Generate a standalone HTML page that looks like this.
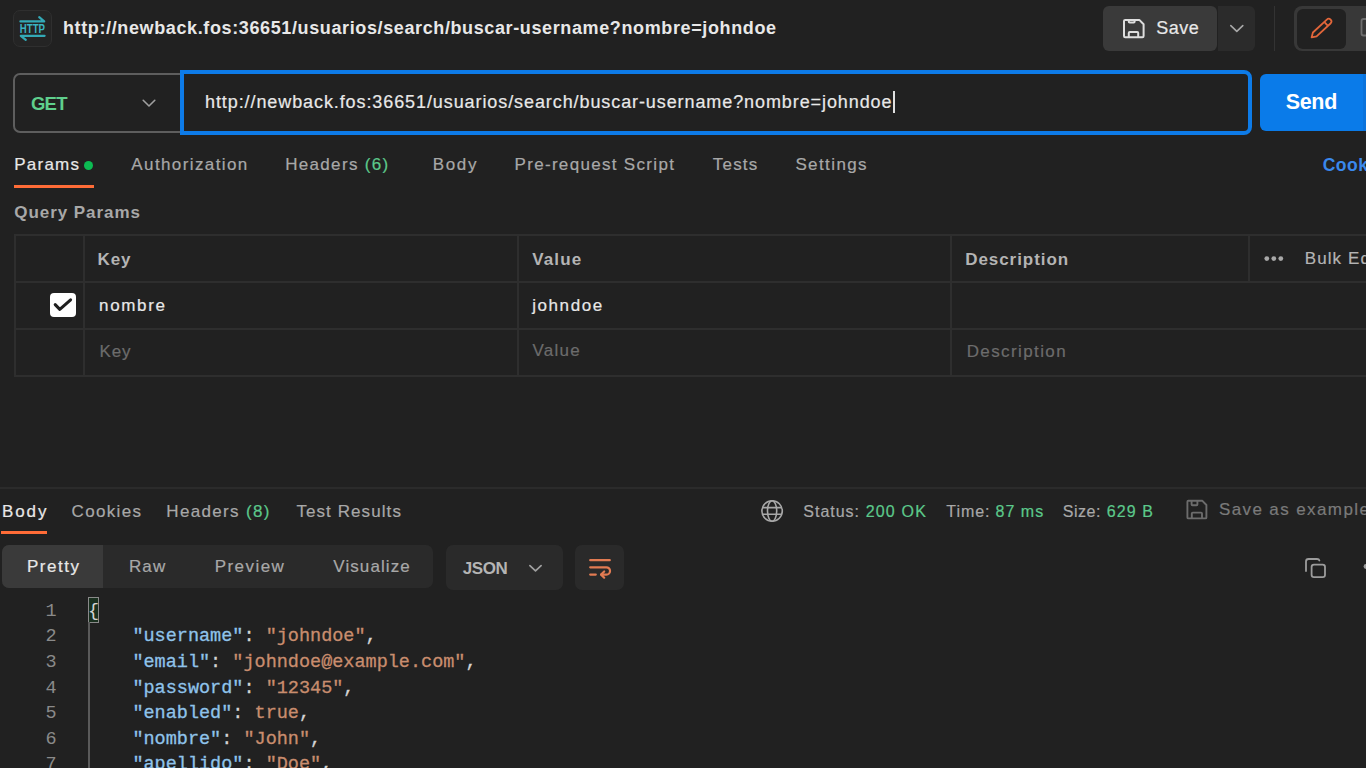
<!DOCTYPE html>
<html><head><meta charset="utf-8">
<style>
html,body{margin:0;padding:0;width:1366px;height:768px;overflow:hidden;background:#212121;}
body{position:relative;font-family:"Liberation Sans", sans-serif;}
.t{position:absolute;white-space:pre;}
.b{position:absolute;box-sizing:border-box;}
</style></head><body>
<!-- HTTP icon -->
<div class="b" style="left:12.5px;top:10px;width:39px;height:37px;background:#242424;border:1px solid #2f2f2f;border-radius:7px;"></div>
<!-- Save button -->
<div class="b" style="left:1103px;top:6px;width:114px;height:45px;background:#3a3a3a;border-radius:6px;"></div>
<div class="b" style="left:1218px;top:6px;width:37px;height:45px;background:#2b2b2b;border-radius:0 6px 6px 0;"></div>
<div class="b" style="left:1274px;top:6px;width:1px;height:45px;background:#333;"></div>
<div class="b" style="left:1294px;top:5.5px;width:90px;height:45.5px;background:#383838;border-radius:8px;"></div>
<div class="b" style="left:1297px;top:8.5px;width:48.5px;height:40px;background:#212121;border-radius:6px;"></div>
<!-- request line -->
<div class="b" style="left:12.5px;top:73px;width:180px;height:59.5px;border:2px solid #5e5e5e;border-radius:7px;"></div>
<div class="b" style="left:180px;top:70px;width:1072px;height:65px;background:#212121;border:4px solid #0d7be8;border-radius:0 8px 8px 0;"></div>
<div class="b" style="left:893px;top:91px;width:1.5px;height:22px;background:#e0e0e0;"></div>
<div class="b" style="left:1260px;top:74px;width:120px;height:57px;background:#0a7be9;border-radius:6px;"></div>
<div class="b" style="left:1363px;top:74px;width:3px;height:57px;background:#0b73dc;"></div>
<!-- tabs -->
<div class="b" style="left:84.3px;top:161.2px;width:9px;height:9px;background:#0cbb52;border-radius:50%;"></div>
<div class="b" style="left:14px;top:185px;width:80px;height:3px;background:#ff6c37;"></div>
<!-- table -->
<div class="b" style="left:14px;top:234px;width:1400px;height:2px;background:#2e2e2e;"></div>
<div class="b" style="left:14px;top:281px;width:1400px;height:2px;background:#2e2e2e;"></div>
<div class="b" style="left:14px;top:328px;width:1400px;height:2px;background:#2e2e2e;"></div>
<div class="b" style="left:14px;top:375px;width:1400px;height:2px;background:#2e2e2e;"></div>
<div class="b" style="left:14px;top:234px;width:2px;height:143px;background:#2e2e2e;"></div>
<div class="b" style="left:83px;top:234px;width:2px;height:143px;background:#2e2e2e;"></div>
<div class="b" style="left:517px;top:234px;width:2px;height:143px;background:#2e2e2e;"></div>
<div class="b" style="left:950px;top:234px;width:2px;height:143px;background:#2e2e2e;"></div>
<div class="b" style="left:1248px;top:234px;width:2px;height:49px;background:#2e2e2e;"></div>
<div class="b" style="left:50px;top:293px;width:26px;height:24px;background:#fff;border-radius:4px;"></div>
<!-- response -->
<div class="b" style="left:0;top:486.5px;width:1366px;height:2px;background:#2b2b2b;"></div>
<div class="b" style="left:1px;top:531px;width:46px;height:3px;background:#ff6c37;"></div>
<div class="b" style="left:1.5px;top:545px;width:431.5px;height:43px;background:#2a2a2a;border-radius:7px;"></div>
<div class="b" style="left:1.5px;top:545px;width:101.5px;height:43px;background:#3a3a3a;border-radius:7px 0 0 7px;"></div>
<div class="b" style="left:446px;top:545px;width:117px;height:45px;background:#2a2a2a;border-radius:7px;"></div>
<div class="b" style="left:575px;top:545px;width:49px;height:45px;background:#2a2a2a;border-radius:7px;"></div>
<!-- code -->
<div class="b" style="left:88px;top:597px;width:10.5px;height:25.5px;background:#1a301f;border:1.5px solid #8a8a8a;"></div>
<div class="b" style="left:88px;top:622px;width:1.5px;height:146px;background:#5a5a5a;"></div>
<svg class="b" style="left:0;top:0;" width="1366" height="768" viewBox="0 0 1366 768" fill="none" stroke-linecap="round" stroke-linejoin="round">
<!-- HTTP icon -->
<g stroke="#33a9b6" stroke-width="2.2">
<path d="M20.4 21.4 H44.2 L39.2 17.2"/>
<path d="M44.6 35.8 H20.8 L25.8 39.8"/>
</g>
<text x="19.8" y="33.2" font-family="Liberation Sans" font-weight="700" font-size="12.8" fill="#3ab4c2" textLength="25.2" lengthAdjust="spacingAndGlyphs">HTTP</text>
<!-- save floppy top -->
<path d="M1124 21 Q1124 19.9 1125.2 19.9 H1139.3 L1143.6 24.2 V36.1 Q1143.6 37.3 1142.4 37.3 H1125.2 Q1124 37.3 1124 36.1 Z M1128.8 20 V21.8 Q1128.8 22.6 1129.6 22.6 H1133.8 Q1134.6 22.6 1134.6 21.8 V20 M1128.8 37.2 V32.9 Q1128.8 31.9 1129.8 31.9 H1137.2 Q1138.2 31.9 1138.2 32.9 V37.2" stroke="#dedede" stroke-width="2"/>
<!-- save chevron -->
<path d="M1230.8 25.6 L1236.8 31.4 L1242.8 25.6" stroke="#a8a8a8" stroke-width="1.6"/>
<!-- pencil -->
<g transform="translate(1311.6 37.4) rotate(-43)">
<path d="M0 0 L4.3 -2.7 H23.3 Q26 -2.7 26 0 Q26 2.7 23.3 2.7 H4.3 Z M19.8 -2.7 V2.7" stroke="#e2663a" stroke-width="1.8"/>
</g>
<!-- right partial icon -->
<rect x="1361.5" y="19" width="10" height="16.5" rx="2" stroke="#6e6e6e" stroke-width="1.8"/>
<!-- GET chevron -->
<path d="M143.2 100.3 L149 106 L154.8 100.3" stroke="#a0a0a0" stroke-width="1.6"/>
<!-- checkmark -->
<path d="M55.2 304.6 L59.8 309.4 L70.6 299.8" stroke="#1f1f1f" stroke-width="3"/>
<!-- dots -->
<g fill="#a8a8a8"><circle cx="1266.8" cy="258.6" r="2.4"/><circle cx="1273.8" cy="258.6" r="2.4"/><circle cx="1280.8" cy="258.6" r="2.4"/></g>
<!-- globe -->
<g stroke="#a8a8a8" stroke-width="1.6">
<circle cx="772.1" cy="511" r="10.2"/>
<ellipse cx="772.1" cy="511" rx="4.6" ry="10.2"/>
<path d="M763 507.6 H781.2 M763 514.3 H781.2"/>
</g>
<!-- save as example floppy -->
<path d="M1187.4 501.8 Q1187.4 500.8 1188.4 500.8 H1202.4 L1206.4 505 V517.4 Q1206.4 518.4 1205.4 518.4 H1188.4 Q1187.4 518.4 1187.4 517.4 Z M1191.6 501 V504.4 Q1191.6 505.2 1192.4 505.2 H1196.6 Q1197.4 505.2 1197.4 504.4 V501 M1191.8 518.2 V513.6 Q1191.8 512.6 1192.8 512.6 H1201 Q1202 512.6 1202 513.6 V518.2" stroke="#6c6c6c" stroke-width="1.9"/>
<!-- JSON chevron -->
<path d="M529.9 565.6 L535.5 570.8 L541.1 565.6" stroke="#a0a0a0" stroke-width="1.7"/>
<!-- wrap icon -->
<g stroke="#e27b52" stroke-width="2.2">
<path d="M590.2 560.2 H609.8"/>
<path d="M590.2 567.3 H606.4 A3.65 3.65 0 0 1 606.4 574.6 H601.2"/>
<path d="M604.2 571.5 L601.1 574.6 L604.2 577.7"/>
<path d="M590.2 574.6 H595.8"/>
</g>
<!-- copy icon -->
<g stroke="#9c9c9c" stroke-width="1.8">
<path d="M1306 571 V561.5 Q1306 559 1308.5 559 H1317 Q1319 559 1319.4 560.5"/>
<rect x="1311.6" y="564.6" width="13.4" height="12.6" rx="2.4"/>
</g>
<circle cx="1366" cy="566.5" r="2.4" fill="#9c9c9c"/>
</svg>
<span class='t' style='left:63.00px;top:18.76px;font-size:18px;line-height:18px;font-weight:700;color:#e8e8e8;font-family:"Liberation Sans", sans-serif;letter-spacing:0.619px;'>http://newback.fos:36651/usuarios/search/buscar-username?nombre=johndoe</span>
<span class='t' style='left:1156.30px;top:18.66px;font-size:18px;line-height:18px;font-weight:400;color:#e8e8e8;font-family:"Liberation Sans", sans-serif;letter-spacing:0.456px;-webkit-text-stroke:0.2px currentColor;'>Save</span>
<span class='t' style='left:31.00px;top:94.54px;font-size:18.5px;line-height:18.5px;font-weight:700;color:#5fcf8d;font-family:"Liberation Sans", sans-serif;letter-spacing:-0.766px;'>GET</span>
<span class='t' style='left:205.00px;top:93.16px;font-size:18px;line-height:18px;font-weight:400;color:#e8e8e8;font-family:"Liberation Sans", sans-serif;letter-spacing:0.909px;-webkit-text-stroke:0.2px currentColor;'>http://newback.fos:36651/usuarios/search/buscar-username?nombre=johndoe</span>
<span class='t' style='left:1285.70px;top:92.00px;font-size:21.5px;line-height:21.5px;font-weight:700;color:#ffffff;font-family:"Liberation Sans", sans-serif;letter-spacing:-0.326px;'>Send</span>
<span class='t' style='left:14.30px;top:156.31px;font-size:17px;line-height:17px;font-weight:400;color:#e8e8e8;font-family:"Liberation Sans", sans-serif;letter-spacing:1.224px;-webkit-text-stroke:0.2px currentColor;'>Params</span>
<span class='t' style='left:131.30px;top:156.31px;font-size:17px;line-height:17px;font-weight:400;color:#a8a8a8;font-family:"Liberation Sans", sans-serif;letter-spacing:1.397px;-webkit-text-stroke:0.2px currentColor;'>Authorization</span>
<span class='t' style='left:285.20px;top:156.31px;font-size:17px;line-height:17px;font-weight:400;color:#a8a8a8;font-family:"Liberation Sans", sans-serif;letter-spacing:1.323px;-webkit-text-stroke:0.2px currentColor;'>Headers <span style="color:#5cc98b">(6)</span></span>
<span class='t' style='left:432.70px;top:156.31px;font-size:17px;line-height:17px;font-weight:400;color:#a8a8a8;font-family:"Liberation Sans", sans-serif;letter-spacing:1.683px;-webkit-text-stroke:0.2px currentColor;'>Body</span>
<span class='t' style='left:514.50px;top:156.31px;font-size:17px;line-height:17px;font-weight:400;color:#a8a8a8;font-family:"Liberation Sans", sans-serif;letter-spacing:1.318px;-webkit-text-stroke:0.2px currentColor;'>Pre-request Script</span>
<span class='t' style='left:712.80px;top:156.31px;font-size:17px;line-height:17px;font-weight:400;color:#a8a8a8;font-family:"Liberation Sans", sans-serif;letter-spacing:1.203px;-webkit-text-stroke:0.2px currentColor;'>Tests</span>
<span class='t' style='left:795.40px;top:156.31px;font-size:17px;line-height:17px;font-weight:400;color:#a8a8a8;font-family:"Liberation Sans", sans-serif;letter-spacing:1.395px;-webkit-text-stroke:0.2px currentColor;'>Settings</span>
<span class='t' style='left:1322.70px;top:156.68px;font-size:17.5px;line-height:17.5px;font-weight:700;color:#3a88ec;font-family:"Liberation Sans", sans-serif;letter-spacing:0.487px;'>Cookies</span>
<span class='t' style='left:14.30px;top:203.91px;font-size:17px;line-height:17px;font-weight:700;color:#a8a8a8;font-family:"Liberation Sans", sans-serif;letter-spacing:0.937px;'>Query Params</span>
<span class='t' style='left:97.50px;top:251.21px;font-size:17px;line-height:17px;font-weight:700;color:#b4b4b4;font-family:"Liberation Sans", sans-serif;letter-spacing:0.906px;'>Key</span>
<span class='t' style='left:532.20px;top:251.11px;font-size:17px;line-height:17px;font-weight:700;color:#b4b4b4;font-family:"Liberation Sans", sans-serif;letter-spacing:1.145px;'>Value</span>
<span class='t' style='left:965.20px;top:251.11px;font-size:17px;line-height:17px;font-weight:700;color:#b4b4b4;font-family:"Liberation Sans", sans-serif;letter-spacing:0.947px;'>Description</span>
<span class='t' style='left:1304.70px;top:249.61px;font-size:17px;line-height:17px;font-weight:400;color:#b4b4b4;font-family:"Liberation Sans", sans-serif;letter-spacing:1.113px;-webkit-text-stroke:0.2px currentColor;'>Bulk Edit</span>
<span class='t' style='left:99.00px;top:296.81px;font-size:17px;line-height:17px;font-weight:400;color:#e8e8e8;font-family:"Liberation Sans", sans-serif;letter-spacing:1.672px;-webkit-text-stroke:0.2px currentColor;'>nombre</span>
<span class='t' style='left:532.20px;top:296.91px;font-size:17px;line-height:17px;font-weight:400;color:#e8e8e8;font-family:"Liberation Sans", sans-serif;letter-spacing:1.581px;-webkit-text-stroke:0.2px currentColor;'>johndoe</span>
<span class='t' style='left:99.60px;top:342.91px;font-size:17px;line-height:17px;font-weight:400;color:#6c6c6c;font-family:"Liberation Sans", sans-serif;letter-spacing:0.852px;-webkit-text-stroke:0.2px currentColor;'>Key</span>
<span class='t' style='left:532.60px;top:341.91px;font-size:17px;line-height:17px;font-weight:400;color:#6c6c6c;font-family:"Liberation Sans", sans-serif;letter-spacing:1.195px;-webkit-text-stroke:0.2px currentColor;'>Value</span>
<span class='t' style='left:966.70px;top:342.61px;font-size:17px;line-height:17px;font-weight:400;color:#6c6c6c;font-family:"Liberation Sans", sans-serif;letter-spacing:1.395px;-webkit-text-stroke:0.2px currentColor;'>Description</span>
<span class='t' style='left:1.90px;top:502.51px;font-size:17px;line-height:17px;font-weight:400;color:#e8e8e8;font-family:"Liberation Sans", sans-serif;letter-spacing:1.917px;-webkit-text-stroke:0.2px currentColor;'>Body</span>
<span class='t' style='left:71.60px;top:502.51px;font-size:17px;line-height:17px;font-weight:400;color:#a8a8a8;font-family:"Liberation Sans", sans-serif;letter-spacing:1.330px;-webkit-text-stroke:0.2px currentColor;'>Cookies</span>
<span class='t' style='left:166.30px;top:502.51px;font-size:17px;line-height:17px;font-weight:400;color:#a8a8a8;font-family:"Liberation Sans", sans-serif;letter-spacing:1.333px;-webkit-text-stroke:0.2px currentColor;'>Headers <span style="color:#5cc98b">(8)</span></span>
<span class='t' style='left:296.40px;top:502.51px;font-size:17px;line-height:17px;font-weight:400;color:#a8a8a8;font-family:"Liberation Sans", sans-serif;letter-spacing:1.082px;-webkit-text-stroke:0.2px currentColor;'>Test Results</span>
<span class='t' style='left:803.30px;top:504.05px;font-size:16px;line-height:16px;font-weight:400;color:#a8a8a8;font-family:"Liberation Sans", sans-serif;letter-spacing:0.981px;-webkit-text-stroke:0.2px currentColor;'>Status:</span>
<span class='t' style='left:865.70px;top:504.05px;font-size:16px;line-height:16px;font-weight:400;color:#5cc98b;font-family:"Liberation Sans", sans-serif;letter-spacing:1.187px;-webkit-text-stroke:0.2px currentColor;'>200 OK</span>
<span class='t' style='left:946.30px;top:504.05px;font-size:16px;line-height:16px;font-weight:400;color:#a8a8a8;font-family:"Liberation Sans", sans-serif;letter-spacing:0.923px;-webkit-text-stroke:0.2px currentColor;'>Time:</span>
<span class='t' style='left:995.60px;top:504.05px;font-size:16px;line-height:16px;font-weight:400;color:#5cc98b;font-family:"Liberation Sans", sans-serif;letter-spacing:1.005px;-webkit-text-stroke:0.2px currentColor;'>87 ms</span>
<span class='t' style='left:1062.70px;top:504.05px;font-size:16px;line-height:16px;font-weight:400;color:#a8a8a8;font-family:"Liberation Sans", sans-serif;letter-spacing:0.530px;-webkit-text-stroke:0.2px currentColor;'>Size:</span>
<span class='t' style='left:1106.70px;top:504.05px;font-size:16px;line-height:16px;font-weight:400;color:#5cc98b;font-family:"Liberation Sans", sans-serif;letter-spacing:1.097px;-webkit-text-stroke:0.2px currentColor;'>629 B</span>
<span class='t' style='left:1218.90px;top:501.31px;font-size:17px;line-height:17px;font-weight:400;color:#7a7a7a;font-family:"Liberation Sans", sans-serif;letter-spacing:1.400px;-webkit-text-stroke:0.2px currentColor;'>Save as example</span>
<span class='t' style='left:26.90px;top:557.81px;font-size:17px;line-height:17px;font-weight:400;color:#e8e8e8;font-family:"Liberation Sans", sans-serif;letter-spacing:1.519px;-webkit-text-stroke:0.2px currentColor;'>Pretty</span>
<span class='t' style='left:128.90px;top:557.81px;font-size:17px;line-height:17px;font-weight:400;color:#a8a8a8;font-family:"Liberation Sans", sans-serif;letter-spacing:1.142px;-webkit-text-stroke:0.2px currentColor;'>Raw</span>
<span class='t' style='left:214.70px;top:557.81px;font-size:17px;line-height:17px;font-weight:400;color:#a8a8a8;font-family:"Liberation Sans", sans-serif;letter-spacing:1.455px;-webkit-text-stroke:0.2px currentColor;'>Preview</span>
<span class='t' style='left:333.30px;top:557.81px;font-size:17px;line-height:17px;font-weight:400;color:#a8a8a8;font-family:"Liberation Sans", sans-serif;letter-spacing:1.083px;-webkit-text-stroke:0.2px currentColor;'>Visualize</span>
<span class='t' style='left:462.70px;top:560.11px;font-size:17px;line-height:17px;font-weight:700;color:#b4b4b4;font-family:"Liberation Sans", sans-serif;letter-spacing:-0.366px;'>JSON</span>
<span class='t' style='left:45.50px;top:602.83px;font-size:18.5px;line-height:18.5px;font-weight:400;color:#8a8a8a;font-family:"Liberation Mono", monospace;letter-spacing:0.000px;'>1</span>
<span class='t' style='left:88.00px;top:602.83px;font-size:18.5px;line-height:18.5px;font-weight:400;color:#d4d4d4;font-family:"Liberation Mono", monospace;letter-spacing:0.000px;'>{</span>
<span class='t' style='left:45.50px;top:628.43px;font-size:18.5px;line-height:18.5px;font-weight:400;color:#8a8a8a;font-family:"Liberation Mono", monospace;letter-spacing:0.000px;'>2</span>
<span class='t' style='left:132.40px;top:628.43px;font-size:18.5px;line-height:18.5px;font-weight:400;color:#d4d4d4;font-family:"Liberation Mono", monospace;letter-spacing:0.000px;-webkit-text-stroke:0.3px currentColor;'><span style="color:#8fc3ea">"username"</span>: <span style="color:#c98d6e">"johndoe"</span>,</span>
<span class='t' style='left:45.50px;top:654.03px;font-size:18.5px;line-height:18.5px;font-weight:400;color:#8a8a8a;font-family:"Liberation Mono", monospace;letter-spacing:0.000px;'>3</span>
<span class='t' style='left:132.40px;top:654.03px;font-size:18.5px;line-height:18.5px;font-weight:400;color:#d4d4d4;font-family:"Liberation Mono", monospace;letter-spacing:0.000px;-webkit-text-stroke:0.3px currentColor;'><span style="color:#8fc3ea">"email"</span>: <span style="color:#c98d6e">"johndoe@example.com"</span>,</span>
<span class='t' style='left:45.50px;top:679.63px;font-size:18.5px;line-height:18.5px;font-weight:400;color:#8a8a8a;font-family:"Liberation Mono", monospace;letter-spacing:0.000px;'>4</span>
<span class='t' style='left:132.40px;top:679.63px;font-size:18.5px;line-height:18.5px;font-weight:400;color:#d4d4d4;font-family:"Liberation Mono", monospace;letter-spacing:0.000px;-webkit-text-stroke:0.3px currentColor;'><span style="color:#8fc3ea">"password"</span>: <span style="color:#c98d6e">"12345"</span>,</span>
<span class='t' style='left:45.50px;top:705.23px;font-size:18.5px;line-height:18.5px;font-weight:400;color:#8a8a8a;font-family:"Liberation Mono", monospace;letter-spacing:0.000px;'>5</span>
<span class='t' style='left:132.40px;top:705.23px;font-size:18.5px;line-height:18.5px;font-weight:400;color:#d4d4d4;font-family:"Liberation Mono", monospace;letter-spacing:0.000px;-webkit-text-stroke:0.3px currentColor;'><span style="color:#8fc3ea">"enabled"</span>: <span style="color:#c98d6e">true</span>,</span>
<span class='t' style='left:45.50px;top:730.83px;font-size:18.5px;line-height:18.5px;font-weight:400;color:#8a8a8a;font-family:"Liberation Mono", monospace;letter-spacing:0.000px;'>6</span>
<span class='t' style='left:132.40px;top:730.83px;font-size:18.5px;line-height:18.5px;font-weight:400;color:#d4d4d4;font-family:"Liberation Mono", monospace;letter-spacing:0.000px;-webkit-text-stroke:0.3px currentColor;'><span style="color:#8fc3ea">"nombre"</span>: <span style="color:#c98d6e">"John"</span>,</span>
<span class='t' style='left:45.50px;top:756.43px;font-size:18.5px;line-height:18.5px;font-weight:400;color:#8a8a8a;font-family:"Liberation Mono", monospace;letter-spacing:0.000px;'>7</span>
<span class='t' style='left:132.40px;top:756.43px;font-size:18.5px;line-height:18.5px;font-weight:400;color:#d4d4d4;font-family:"Liberation Mono", monospace;letter-spacing:0.000px;-webkit-text-stroke:0.3px currentColor;'><span style="color:#8fc3ea">"apellido"</span>: <span style="color:#c98d6e">"Doe"</span>,</span>
</body></html>
